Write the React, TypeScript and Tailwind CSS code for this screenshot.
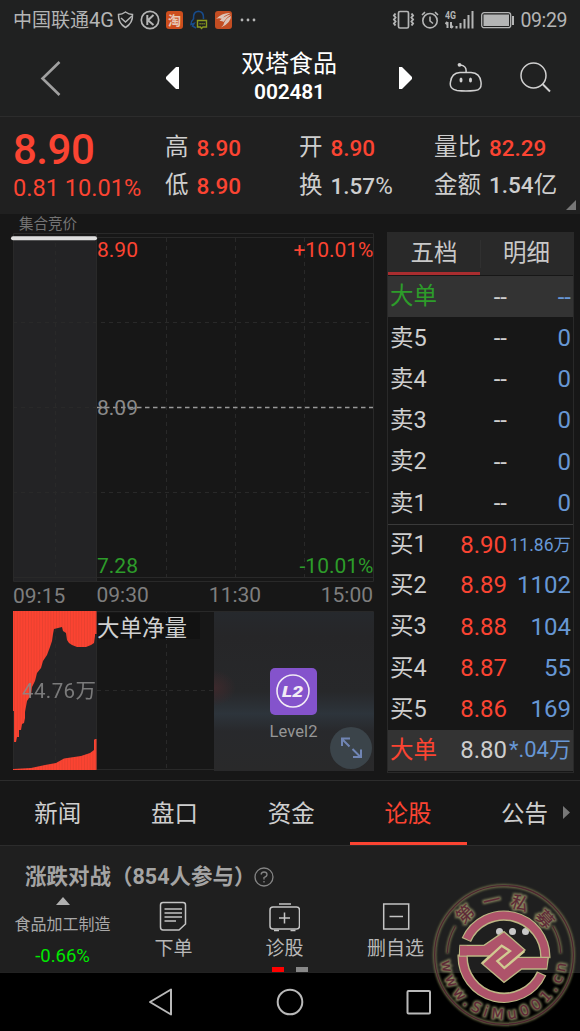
import type { ReactNode } from "react";

const depth = [
  { label: "大单", price: "--", volume: "--", kind: "topBig" },
  { label: "卖5", price: "--", volume: "0", kind: "sell" },
  { label: "卖4", price: "--", volume: "0", kind: "sell" },
  { label: "卖3", price: "--", volume: "0", kind: "sell" },
  { label: "卖2", price: "--", volume: "0", kind: "sell" },
  { label: "卖1", price: "--", volume: "0", kind: "sell" },
  { label: "买1", price: "8.90", volume: "11.86万", kind: "buy" },
  { label: "买2", price: "8.89", volume: "1102", kind: "buy" },
  { label: "买3", price: "8.88", volume: "104", kind: "buy" },
  { label: "买4", price: "8.87", volume: "55", kind: "buy" },
  { label: "买5", price: "8.86", volume: "169", kind: "buy" },
  { label: "大单", price: "8.80", volume: "*.04万", kind: "bottomBig" },
];

const tabs = ["新闻", "盘口", "资金", "论股", "公告"];

function StatusBar() {
  return (
    <div className="flex h-10 items-center pl-[13px] pr-[13px] text-[#b4b5b5]">
      <span className="w-[102px] whitespace-nowrap text-[19px] leading-none">
        中国联通<span className="text-[20px]">4G</span>
      </span>
      <svg className="ml-[2px]" width="17" height="18" viewBox="0 0 17 18" fill="none" stroke="currentColor" strokeWidth="1.5">
        <path d="M1.5 3.5Q5 3.5 8.5 1Q12 3.5 15.5 3.5Q16 12 8.5 16.5Q1 12 1.5 3.5Z" />
        <path d="M4 7L8.5 11L15 5" />
      </svg>
      <svg className="ml-[6px]" width="20" height="20" viewBox="0 0 20 20" fill="none" stroke="currentColor" strokeWidth="1.7">
        <circle cx="10" cy="10" r="8.7" />
        <path d="M7.3 5V15M13.5 5L8 10.3L13.5 15" strokeWidth="2" />
      </svg>
      <span className="ml-[6px] flex h-[18px] w-[17px] items-center justify-center rounded-[3px] bg-[#cd4e1d] text-[13px] font-bold leading-none text-[#e8c9b7]">
        淘
      </span>
      <svg className="ml-[7px]" width="18" height="20" viewBox="0 0 18 20" fill="none">
        <path d="M6 18L2.500 16L4 13.500L1 14.500Q1 11 3.500 9Q3 1.500 8.500 1.200Q14 1.500 13.500 9" stroke="#174b8c" strokeWidth="1.6" />
        <path d="M7.500 10.500H16.500V17H13L11.500 18.500L10.500 17H7.500Z" stroke="#8b9b20" strokeWidth="1.4" />
        <path d="M9.500 13.800H15" stroke="#8b9b20" strokeWidth="1.4" strokeDasharray="1.2 .8" />
      </svg>
      <svg className="ml-[7px]" width="17" height="18" viewBox="0 0 17 18">
        <rect width="17" height="18" rx="3" fill="#c34d22" />
        <path d="M1 8Q7 1.500 15.500 2Q10 4 7 8Q4 6.500 1 8ZM4.500 10Q9 4.500 16 3.500Q11 7 8.500 11Q7 9.500 4.500 10ZM9 12Q11 7 16 5Q16 12 6 16.500Q9 14.500 9 12Z" fill="#dcc4b8" />
      </svg>
      <svg className="ml-[8px]" width="16" height="4" viewBox="0 0 16 4" fill="currentColor">
        <circle cx="2" cy="2" r="1.400" />
        <circle cx="8" cy="2" r="1.400" />
        <circle cx="14" cy="2" r="1.400" />
      </svg>
      <div className="ml-auto flex items-center">
        <svg width="24" height="20" viewBox="0 0 24 20" fill="none" stroke="currentColor" strokeWidth="1.5">
          <rect x="6.500" y="1.500" width="10" height="16.500" rx="1.500" strokeWidth="1.700" />
          <path d="M3.500 3.500L2 5.500L3.500 7.500L2 9.500L3.500 11.500L2 13.500L3.500 15.500M19.500 3.500L21 5.500L19.500 7.500L21 9.500L19.500 11.500L21 13.500L19.500 15.500" strokeWidth="2" />
        </svg>
        <svg className="ml-[5px]" width="18" height="18" viewBox="0 0 18 18" fill="none" stroke="currentColor" strokeWidth="1.6">
          <circle cx="9" cy="9.700" r="7.200" />
          <path d="M9 5.500V10L12 12.500M1 4L4 1.200M17 4L14 1.200" />
        </svg>
        <svg className="ml-[6px]" width="30" height="20" viewBox="0 0 30 20" fill="currentColor">
          <text x="0" y="8.500" fontSize="10" fontWeight="700" textLength="11" lengthAdjust="spacingAndGlyphs">4G</text>
          <path d="M2.500 12V18M6 12V18M0.500 14L2.500 12M6 18L8 16M11.500 16V18.500M15.500 13V18.500M19.500 9V18.500M23.500 5V18.500M27.500 1V18.500" fill="none" stroke="currentColor" strokeWidth="2" />
        </svg>
        <svg className="ml-[6px]" width="34" height="17" viewBox="0 0 34 17">
          <rect x=".7" y=".7" width="29" height="15" rx="2.500" fill="none" stroke="currentColor" strokeWidth="1.300" />
          <rect x="2.500" y="2.500" width="25.500" height="11.500" fill="currentColor" />
          <path d="M32 4V13" stroke="currentColor" strokeWidth="2" />
        </svg>
        <span className="ml-[5px] pt-[1px] text-[19.500px] leading-none tracking-[-0.400px]">09:29</span>
      </div>
    </div>
  );
}

function Header() {
  return (
    <header className="flex h-[77px] items-center border-b border-[#2c2c2c]">
      <svg className="ml-10" width="22" height="36" viewBox="0 0 22 36" fill="none">
        <path d="M19.500 2L2.500 18.500L19.500 35" stroke="#a0a0a0" strokeWidth="2.600" />
      </svg>
      <svg className="ml-[103px]" width="14" height="22" viewBox="0 0 14 22">
        <path d="M14 0V22H11L1 12V10L11 0Z" fill="#fff" />
      </svg>
      <div className="ml-[45px] flex w-[130px] flex-col items-center text-white">
        <h1 className="text-[24px] leading-[28px]">双塔食品</h1>
        <span className="pl-[1px] text-[21px] font-semibold leading-[28px] tracking-[-0.200px]">002481</span>
      </div>
      <svg className="ml-[45px]" width="14" height="22" viewBox="0 0 14 22">
        <path d="M0 0V22H3L13 12V10L3 0Z" fill="#fff" />
      </svg>
      <svg className="ml-[36px] mb-[3px]" width="34" height="32" viewBox="0 0 34 32" fill="none" stroke="#d0d0d0" strokeWidth="1.500">
        <path d="M11 11.500H22Q31 12 32 21Q33 29 26 29.500Q17 30.500 8 29.500Q0 28 1.500 21Q2.500 12 11 11.500ZM17 11.500Q18 4.500 11 4" />
        <circle cx="10.500" cy="3.800" r="1.900" fill="#d0d0d0" stroke="none" />
        <ellipse cx="12" cy="19" rx="1.500" ry="2.600" fill="#d0d0d0" stroke="none" />
        <ellipse cx="21.500" cy="19" rx="1.500" ry="2.600" fill="#d0d0d0" stroke="none" />
      </svg>
      <svg className="ml-[37px]" width="32" height="32" viewBox="0 0 32 32" fill="none" stroke="#d0d0d0" strokeWidth="1.500">
        <circle cx="13.500" cy="13.500" r="12.500" />
        <path d="M22.500 22L30 29.500" strokeWidth="2" />
      </svg>
    </header>
  );
}

function Stat({ label, value, red, unit }: { label: string; value: string; red?: boolean; unit?: string }) {
  return (
    <div className="flex h-[38px] items-center gap-[8px] whitespace-nowrap text-[23.500px] leading-none text-[#cecece]">
      <span>{label}</span>
      <span className={`text-[22.500px] font-medium ${red ? "text-[#fb4432]" : ""}`}>
        {value}
        {unit && <span className={unit === "亿" ? "text-[23.500px] font-normal" : "text-[24px] font-normal"}>{unit}</span>}
      </span>
    </div>
  );
}

function Quote() {
  return (
    <section className="relative flex h-[97px] bg-[#202020] pt-[12px]">
      <div className="w-[165px] pl-[13px] text-[#fb4432]">
        <div className="h-[42px] text-[42px] font-medium leading-[41px] tracking-[-0.500px]">8.90</div>
        <div className="whitespace-nowrap pt-[5px] text-[23.600px] leading-[24px]">0.81 10.01%</div>
      </div>
      <div className="w-[134px]">
        <Stat label="高" value="8.90" red />
        <Stat label="低" value="8.90" red />
      </div>
      <div className="w-[135px]">
        <Stat label="开" value="8.90" red />
        <Stat label="换" value="1.57" unit="%" />
      </div>
      <div>
        <Stat label="量比" value="82.29" red />
        <Stat label="金额" value="1.54" unit="亿" />
      </div>
      <svg className="absolute bottom-[4px] right-[4px]" width="10" height="10" viewBox="0 0 10 10">
        <path d="M10 0V10H0Z" fill="#777" />
      </svg>
    </section>
  );
}

function PriceChart() {
  return (
    <svg className="block" width="364" height="394" viewBox="10 214 364 394" fontSize="21">
      <text x="19" y="229" fontSize="14.500" fill="#747474">集合竞价</text>
      <rect x="13" y="236" width="84" height="345" fill="#232325" />
      <g fill="none" stroke="#292929">
        <path d="M13.500 233.500H373.500V581.500H13.500ZM97 237.500H373M13 577.500H373M96.500 234V581" />
        <g strokeDasharray="4 4">
          <path d="M55.500 243V577M166.500 238V577M235.500 238V577M304.500 238V577M13 322.500H373M13 492.500H373M13 407.500H97" />
        </g>
      </g>
      <path d="M97 407.500H373" stroke="#999" strokeWidth="1.300" strokeDasharray="4.500 3.500" />
      <path d="M13 238.300H95" stroke="#dedede" strokeWidth="4" strokeLinecap="round" />
      <g fill="#fb4432">
        <text x="97" y="257">8.90</text>
        <text x="373.500" y="257" textAnchor="end">+10.01%</text>
      </g>
      <text x="97" y="415" fill="#8a8a8a">8.09</text>
      <g fill="#2d9c2a">
        <text x="97" y="573">7.28</text>
        <text x="373.500" y="573" textAnchor="end">-10.01%</text>
      </g>
      <g fill="#7e7e7e">
        <text x="13" y="602.500">09:15</text>
        <text x="96.500" y="602">09:30</text>
        <text x="235" y="602" textAnchor="middle">11:30</text>
        <text x="373" y="602" textAnchor="end">15:00</text>
      </g>
    </svg>
  );
}

function OrderFlowChart() {
  return (
    <svg className="block" width="364" height="164" viewBox="10 608 364 164">
      <defs>
        <pattern id="bars" width="2.800" height="10" patternUnits="userSpaceOnUse">
          <rect width="2.800" height="10" fill="#fb4331" />
          <rect width=".6" height="10" fill="#dc3f2f" />
        </pattern>
        <linearGradient id="glass" x1="0" y1="0" x2="0" y2="1">
          <stop offset="0" stopColor="#26292d" />
          <stop offset=".15" stopColor="#262628" />
          <stop offset=".5" stopColor="#27282a" />
          <stop offset=".64" stopColor="#2d343b" />
          <stop offset=".75" stopColor="#28292c" />
          <stop offset="1" stopColor="#29292a" />
        </linearGradient>
        <radialGradient id="warm">
          <stop offset="0" stopColor="#3d292c" />
          <stop offset="1" stopColor="#3d292c" stopOpacity="0" />
        </radialGradient>
        <clipPath id="promo">
          <rect x="214" y="612" width="160" height="159" />
        </clipPath>
      </defs>
      <rect x="13" y="611" width="84" height="159" fill="#232325" />
      <g fill="none" stroke="#292929">
        <path d="M13.500 611.500H373.500V769.500H13.500ZM96.500 611V770" />
        <path d="M55.500 612V770M166.500 612V770M97 690.500H214" strokeDasharray="4 4" />
      </g>
      <path
        fill="url(#bars)"
        d="M13 611H96.500V634H95V636L94 643L91 645L86 647H77L72 645L69 643L67 640L66 633L63 631L62 627L54 629L53 634L52 641L50 647L47 655L43 661L41 668L37 673L35 681L32 687L31 695L27 701L25 712V718L24 723L22 724L21 730H19V737H17L16 742H14V711H13Z"
      />
      <path fill="url(#bars)" d="M13 769L31 768L45 765L56 763L64 758.500L81 756L90 753L94 750V740L95 739H96.500V770H13Z" />
      <text x="22" y="697.500" fontSize="20.500" fill="#8a8a8a" opacity=".85" textLength="74">44.76万</text>
      <rect x="97" y="613" width="103" height="26" fill="#121212" />
      <text x="97" y="635.500" fontSize="22.500" fill="#d0d0d0">大单净量</text>
      <g clipPath="url(#promo)">
        <rect x="214" y="612" width="160" height="159" fill="url(#glass)" />
        <ellipse cx="214" cy="688" rx="22" ry="18" fill="url(#warm)" />
      </g>
      <rect x="270" y="668" width="47" height="47" rx="5" fill="#8453cc" />
      <circle cx="293" cy="691" r="16" fill="none" stroke="#f2ebf5" strokeWidth="1.600" />
      <text x="282" y="696.500" fontSize="15" fontWeight="900" fontStyle="italic" fill="#f2ebf5" textLength="21" lengthAdjust="spacingAndGlyphs">L2</text>
      <text x="293.500" y="737" fontSize="16.500" textAnchor="middle" fill="#969696" textLength="48">Level2</text>
      <circle cx="351" cy="748" r="21" fill="#3b444a" />
      <path d="M349.500 746.500L342 739M342 746V738.500H350M352.500 749L360 756.500M361 749.500V757H353" fill="none" stroke="#7085b4" strokeWidth="2" />
    </svg>
  );
}

function volumeSize(volume: string) {
  if (volume === "11.86万") return "text-[17.500px] pt-[2px]";
  if (volume === "*.04万") return "text-[22px]";
  return "text-[24px]";
}

function DepthPanel() {
  return (
    <aside className="ml-[13px] mt-[18px] h-[541px] w-[187px] border border-[#292929] text-[23.500px]">
      <div className="relative flex h-[42px] items-center bg-[#292929] text-[#c8c8c8]">
        <div className="flex h-full w-[92px] items-center justify-center border-b-[3px] border-[#a92d2f] pt-[2px]">五档</div>
        <div className="h-7 w-px bg-[#303030]" />
        <div className="flex flex-1 items-center justify-center pr-[1px]">明细</div>
      </div>
      <div className="pt-[1px]">
        {depth.map((row, i) => {
          const big = row.kind === "topBig" || row.kind === "bottomBig";
          return (
            <div
              key={i}
              className={`flex h-[41.250px] items-center pl-[2px] pr-[2px] leading-none ${big ? "bg-[#333]" : ""} ${
                i === 6 ? "border-t border-[#3a3a3a]" : ""
              }`}
            >
              <span
                className={`w-[60px] whitespace-nowrap pt-[1px] text-[23.500px] ${
                  row.kind === "topBig" ? "text-[#2d9c2a]" : row.kind === "bottomBig" ? "text-[#fb4432]" : "text-[#cecece]"
                }`}
              >
                {row.label}
              </span>
              <span className={`w-[57px] text-right text-[24px] ${row.kind === "buy" ? "text-[#fb4432]" : "text-[#cecece]"}`}>
                {row.price}
              </span>
              <span className={`flex flex-1 justify-end whitespace-nowrap text-[#6797d5] ${volumeSize(row.volume)}`}>
                {row.volume}
              </span>
            </div>
          );
        })}
      </div>
    </aside>
  );
}

function NewsTabs() {
  return (
    <nav className="relative flex h-[66px] border-y border-[#2c2c2c] bg-[#171717] text-[23.500px] text-[#cecece]">
      {tabs.map((tab) => (
        <div
          key={tab}
          className={`flex w-[116.700px] shrink-0 items-center justify-center pr-[1px] ${
            tab === "论股" ? "border-b-[3px] border-[#fb4432] pt-[7px] text-[#fb4432]" : "pt-[4px]"
          }`}
        >
          {tab}
        </div>
      ))}
      <svg className="absolute right-[10px] top-[25px]" width="7" height="13" viewBox="0 0 7 13">
        <path d="M0 0L7 6.500L0 13Z" fill="#777" />
      </svg>
    </nav>
  );
}

function Tool({ label, children }: { label?: string; children: ReactNode }) {
  return (
    <div className="flex w-[111px] flex-col items-center pt-[5px]">
      <svg width="32" height="32" viewBox="0 0 32 32" fill="none" stroke="#c4c4c4" strokeWidth="1.500">
        {children}
      </svg>
      <span className="mt-[4px] pl-[2px] text-[19px] leading-6 text-[#b8b8b8]">{label}</span>
    </div>
  );
}

function BottomTools() {
  return (
    <section className="h-[126px] bg-[#1f1f1f]">
      <div className="flex h-[50px] items-center pl-[25px] pt-[11px] text-[21.500px] font-bold leading-none text-[#a4a4a4]">
        <span className="w-[229px] whitespace-nowrap">涨跌对战（854人参与）</span>
        <svg width="20" height="20" viewBox="0 0 20 20" fill="none" stroke="#858585" strokeWidth="1.300">
          <circle cx="10" cy="10" r="9" />
          <path d="M7 7.500Q7.500 5 10 5Q13 5 13 7.500Q13 9.500 10 10.500V12.500M10 14V15.500" />
        </svg>
      </div>
      <div className="relative flex h-[76px]">
        <div className="flex w-[117px] flex-col items-center pl-[8px]">
          <svg className="mt-[1px]" width="14" height="8" viewBox="0 0 14 8">
            <path d="M7 0L14 8H0Z" fill="#b0b0b0" />
          </svg>
          <span className="mt-[9px] text-[16px] leading-[22px] text-[#a8a8a8]">食品加工制造</span>
          <span className="mt-[9px] text-[18.500px] leading-[22px] text-[#00e800]">-0.66%</span>
        </div>
        <Tool label="下单">
          <path d="M6 1.500H26Q28.500 1.500 28.500 4V23L22 29H6Q3.500 29 3.500 26V4Q3.500 1.500 6 1.500M7.500 8H25M7.500 12H25M7.500 16H25M7.500 20H19" />
        </Tool>
        <Tool label="诊股">
          <rect x="2" y="6" width="29.500" height="22" rx="3" />
          <path d="M11 3H23M16.500 11.500V22.500M11 17H22M6 29.500H11M22.500 29.500H27.500" />
        </Tool>
        <Tool label="删自选">
          <rect x="4.700" y="3" width="25" height="25" />
          <path d="M10.500 15.500H24" />
        </Tool>
        <div className="flex flex-1 items-start justify-center gap-[6px] pr-[5px] pt-[32px]">
          <span className="size-[7px] rounded-full bg-[#c8c8c8]" />
          <span className="size-[7px] rounded-full bg-[#c8c8c8]" />
          <span className="size-[7px] rounded-full bg-[#c8c8c8]" />
        </div>
        <div className="absolute bottom-0 left-[272px] flex gap-3">
          <span className="h-[5px] w-3 bg-[#f00]" />
          <span className="h-[5px] w-3 bg-[#888]" />
        </div>
      </div>
    </section>
  );
}

function AndroidNav() {
  return (
    <footer className="flex h-[59px] items-center justify-between border-t border-[#222] bg-black pl-[147px] pr-[147px]">
      <svg width="28" height="28" viewBox="0 0 28 28" fill="none" stroke="#b9b9b9" strokeWidth="2" strokeLinejoin="round">
        <path d="M24 1.500V26.500L3 14Z" />
      </svg>
      <svg width="28" height="28" viewBox="0 0 28 28" fill="none" stroke="#b9b9b9" strokeWidth="2">
        <circle cx="14" cy="14" r="12.300" />
      </svg>
      <svg width="28" height="28" viewBox="0 0 28 28" fill="none" stroke="#b9b9b9" strokeWidth="2">
        <rect x="2.500" y="3" width="22.500" height="22.500" rx="1" />
      </svg>
    </footer>
  );
}

const sealTop = [
  { char: "第", x: 165, y: 132, turn: -44 },
  { char: "一", x: 245, y: 92, turn: -13 },
  { char: "私", x: 330, y: 99, turn: 17 },
  { char: "募", x: 405, y: 147, turn: 48 },
];

function SealText() {
  return (
    <>
      {sealTop.map((item) => (
        <text
          key={item.char}
          transform={`translate(${item.x} ${item.y}) rotate(${item.turn})`}
          y="19"
          fontSize="52"
          textAnchor="middle"
        >
          {item.char}
        </text>
      ))}
      <text className="font-['DejaVu_Sans']" fontSize="43">
        <textPath href="#seal-arc" startOffset="14" textLength="556">www.SiMu001.cn</textPath>
      </text>
    </>
  );
}

function Seal() {
  return (
    <svg className="absolute bottom-0 right-0" width="170" height="161" viewBox="0 0 510 483">
      <defs>
        <path id="seal-arc" d="M94 260A188 188 0 0 0 470 260" />
        <filter id="halo" x="-10%" y="-10%" width="120%" height="120%">
          <feGaussianBlur stdDeviation="3" />
        </filter>
      </defs>
      <g filter="url(#halo)" fill="none" stroke="#77764e" strokeWidth="9">
        <circle cx="282" cy="255" r="208" />
        <path d="M112 250A170 170 0 0 1 136 168M428 168A170 170 0 0 1 452 250" />
      </g>
      <g filter="url(#halo)" fill="#8b8960" stroke="#8b8960" strokeWidth="8">
        <SealText />
      </g>
      <g fill="none" stroke="#4c2530" strokeWidth="4">
        <circle cx="282" cy="255" r="208" />
        <path d="M112 250A170 170 0 0 1 136 168M428 168A170 170 0 0 1 452 250" />
      </g>
      <g fill="#5e2937" stroke="#5e2937" strokeWidth=".8">
        <SealText />
      </g>
      <g fill="none">
        <path d="M169 210A124 124 0 0 1 406 264M158 254A124 124 0 0 0 395 310" stroke="#bcb684" strokeWidth="31" />
        <path d="M170 207A124 124 0 0 1 406 264M158 254A124 124 0 0 0 394 313" stroke="#ae536a" strokeWidth="23" />
      </g>
      <path
        d="M150 226H222L282 185L345 240L322 262H415L410 297H335L282 337L215 280L238 258H148Z"
        fill="#ae536a"
        stroke="#bcb684"
        strokeWidth="4"
      />
      <path d="M150 242H170M394 279H410" stroke="#ae536a" strokeWidth="29" />
      <path d="M217 280L275 227L300 243L262 273L283 294L343 243" fill="none" stroke="#d1ca91" strokeWidth="7" />
    </svg>
  );
}

export default function App() {
  return (
    <div className="relative h-[1031px] w-[580px] overflow-hidden bg-[#202121] font-[Roboto,'Noto_Sans_CJK_SC',sans-serif]">
      <StatusBar />
      <Header />
      <Quote />
      <main className="flex h-[566px] bg-[#171717]">
        <div className="ml-[10px] w-[364px]">
          <PriceChart />
          <OrderFlowChart />
        </div>
        <DepthPanel />
      </main>
      <NewsTabs />
      <BottomTools />
      <AndroidNav />
      <Seal />
    </div>
  );
}
